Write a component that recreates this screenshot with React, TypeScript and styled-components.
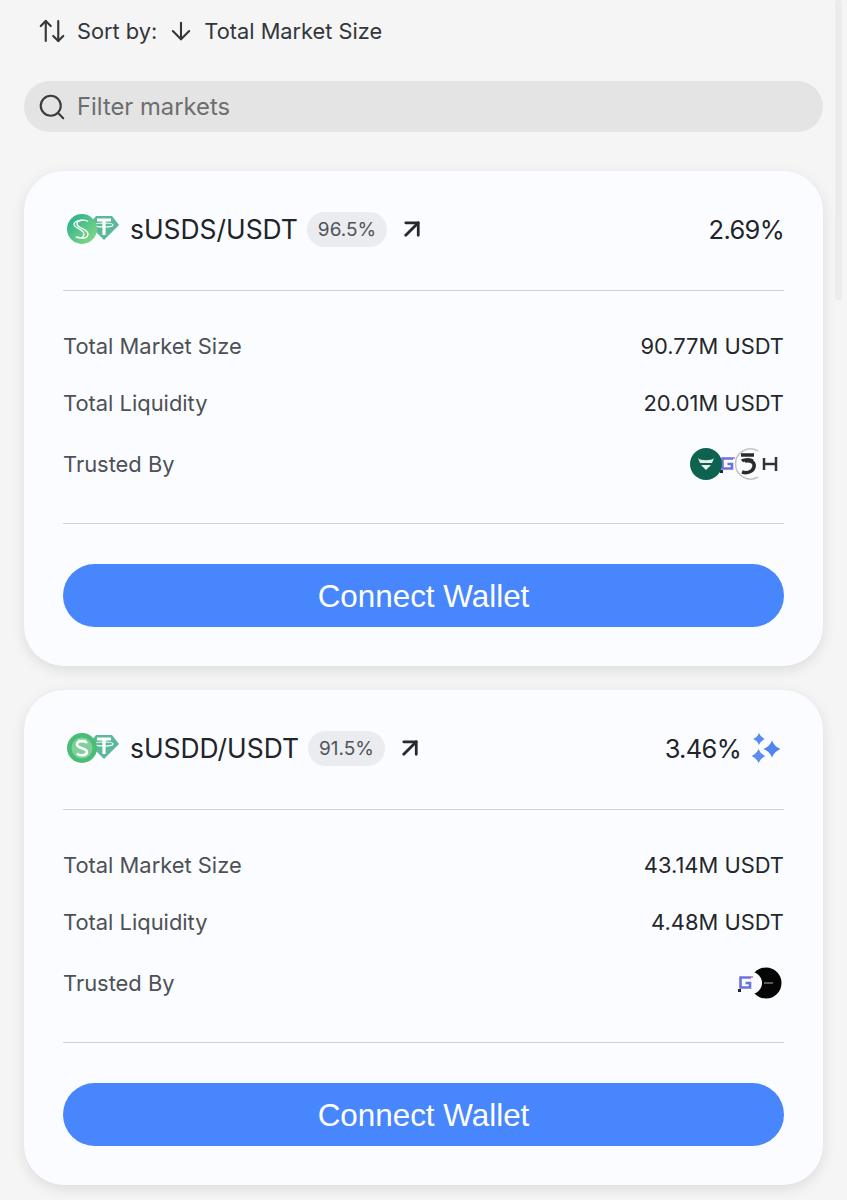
import React from "react";
import styled, { createGlobalStyle } from "styled-components";
import { ArrowDown, ArrowUpDown, ArrowUpRight, Search } from "lucide-react";

const GlobalStyle = createGlobalStyle`
  html, body {
    margin: 0;
    padding: 0;
    height: 1200px;
    overflow: hidden;
    background: #f5f5f5;
  }
  * {
    box-sizing: border-box;
  }
`;

const Page = styled.div`
  position: relative;
  height: 1200px;
  overflow: hidden;
  padding: 0 24px;
  font-family: Inter, "Liberation Sans", sans-serif;
  color: #25282c;
`;

const ScrollThumb = styled.div`
  position: absolute;
  top: 0;
  right: 5px;
  width: 7px;
  height: 300px;
  border-radius: 3px;
  background: #ececec;
`;

const SortBar = styled.div`
  display: flex;
  align-items: center;
  height: 62px;
  padding-left: 13px;
  font-size: 21.8px;
  color: #33363a;
`;

const SortLabel = styled.span`
  margin-left: 10px;
`;

const SortValue = styled.span`
  margin-left: 9px;
`;

const SortArrow = styled.span`
  display: flex;
  margin-left: 10px;
`;

const SearchBar = styled.div`
  display: flex;
  align-items: center;
  gap: 10px;
  height: 51px;
  margin-top: 19px;
  padding-left: 13px;
  border-radius: 26px;
  background: #e4e4e4;
  font-size: 23.8px;
  color: #6c6e70;
`;

const CardList = styled.div`
  display: flex;
  flex-direction: column;
  gap: 24px;
  margin-top: 39px;
`;

const Card = styled.section`
  height: 495px;
  padding: 0 39px;
  border-radius: 40px;
  background: #fbfcff;
  box-shadow: 0 4px 14px rgba(0, 0, 0, 0.1);
`;

const CardHeader = styled.div`
  display: flex;
  align-items: center;
  height: 120px;
  padding-bottom: 3px;
  border-bottom: 1px solid #cfd1d3;
`;

const PairLogo = styled.svg`
  width: 54px;
  height: 32px;
  margin-left: 4px;
  flex: none;
`;

const PairName = styled.span`
  margin-left: 9px;
  font-size: 26.4px;
  color: #212428;
`;

const Score = styled.span`
  margin-left: 9px;
  padding: 0 11px;
  height: 35px;
  line-height: 35px;
  border-radius: 18px;
  background: #ebecef;
  font-size: 19px;
  color: #50545a;
`;

const OpenLink = styled.span`
  display: flex;
  margin-left: 10px;
  color: #26292d;
`;

const Apy = styled.div`
  display: flex;
  align-items: center;
  gap: 11px;
  margin-left: auto;
  font-size: 25.5px;
  letter-spacing: -0.7px;
  color: #212428;
`;

const Stats = styled.div`
  height: 233px;
  padding-top: 26px;
  border-bottom: 1px solid #cfd1d3;
`;

const StatRow = styled.div<{ $height: number }>`
  display: flex;
  align-items: center;
  justify-content: space-between;
  height: ${({ $height }) => $height}px;
  font-size: 21.9px;
`;

const StatLabel = styled.span`
  color: #4d5156;
`;

const StatValue = styled.span`
  color: #24272b;
`;

const TrustLogos = styled.svg`
  width: 110px;
  height: 40px;
  flex: none;
`;

const SparkleIcon = styled.svg`
  width: 28px;
  height: 30px;
  margin-right: 4px;
  flex: none;
`;

const ConnectButton = styled.button`
  display: block;
  width: 100%;
  height: 63px;
  margin-top: 40px;
  padding: 2px 0 0;
  border: none;
  border-radius: 32px;
  background: #4886fe;
  color: #ffffff;
  font-family: "Liberation Sans", Arial, sans-serif;
  font-size: 31.4px;
`;

function TetherMark() {
  return (
    <>
      <path d="M29 3h16l7 9-15 15-15-15z" fill="#5cb89a" />
      <path d="M30 7h14M37 7v15" stroke="#fff" strokeWidth="3.2" fill="none" />
      <ellipse cx="37" cy="12" rx="9" ry="2" stroke="#fff" strokeWidth="1.2" fill="none" />
    </>
  );
}

function SusdsLogo() {
  return (
    <PairLogo viewBox="0 0 54 32">
      <defs>
        <linearGradient id="susds" x1="0" y1="0" x2="1" y2="1">
          <stop offset="0" stopColor="#1fae8d" />
          <stop offset="1" stopColor="#8fdc85" />
        </linearGradient>
      </defs>
      <TetherMark />
      <circle cx="15" cy="16" r="15" fill="url(#susds)" />
      <path d="M21 8.500c-3-2.500-11-1.500-11 2.500s11 5 11 10-7 5-11 2.500" stroke="#fff" strokeWidth="1.400" fill="none" />
      <path d="M16 7.500c-3.500-.5-9 .5-9 4s10 5 10 9.500-5 4.500-8.500 3" stroke="#fff" strokeWidth="1.200" fill="none" />
    </PairLogo>
  );
}

function SusddLogo() {
  return (
    <PairLogo viewBox="0 0 54 32">
      <TetherMark />
      <circle cx="15" cy="16" r="15" fill="#48bd74" />
      <circle cx="15" cy="16" r="10.500" fill="#7fd09c" />
      <path d="M20 11c-2-2.500-10-2.500-10 1.500s10 3.500 10 7.500-8 4-10 1.500" stroke="#fff" strokeWidth="2.600" fill="none" />
      <path d="M11 8.500h8" stroke="#fff" strokeWidth="1.500" />
    </PairLogo>
  );
}

function GridMark({ x, y }: { x: number; y: number }) {
  return (
    <g transform={`translate(${x} ${y})`}>
      <path d="M12 1.500H1.500V11.500H11V7H6.500" stroke="#6d72e0" strokeWidth="2.600" fill="none" />
      <rect x="-1" y="13" width="3" height="3" fill="#23233a" />
      <rect x="12" y="0" width="2" height="2" fill="#e88aa0" />
    </g>
  );
}

function FirstTrustLogos() {
  return (
    <TrustLogos viewBox="0 0 110 40">
      <GridMark x={47} y={13} />
      <path d="M84 7a15 15 0 1 0 0 26" stroke="#c4c4c4" strokeWidth="1.500" fill="none" />
      <path d="M67 11h13M79 17c-5-2-10-1-11 0M71 17c7-1 10 2 9 6s-6 7-12 5" stroke="#2b2b2b" strokeWidth="3.500" fill="none" />
      <path d="M90 14v12M102 13v14M90 20h12" stroke="#333" strokeWidth="2.500" fill="none" />
      <circle cx="32" cy="20" r="16" fill="#0e6350" />
      <path d="M24 14c2 3 14 3 16 0l-2 5H26zM27 21h10l-5 5z" fill="#e4f0ec" />
    </TrustLogos>
  );
}

function SecondTrustLogos() {
  return (
    <TrustLogos viewBox="0 0 110 40">
      <circle cx="92" cy="20" r="15.500" fill="#050505" />
      <circle cx="77" cy="20" r="11" fill="#fbfcff" />
      <path d="M90 20h9" stroke="#777" strokeWidth="1.500" />
      <GridMark x={65} y={13} />
    </TrustLogos>
  );
}

function Star({ cx, cy, r, fill }: { cx: number; cy: number; r: number; fill: string }) {
  const k = r * 0.28;
  const d = `M${cx} ${cy - r}Q${cx + k} ${cy - k} ${cx + r} ${cy}Q${cx + k} ${cy + k} ${cx} ${cy + r}Q${cx - k} ${cy + k} ${cx - r} ${cy}Q${cx - k} ${cy - k} ${cx} ${cy - r}Z`;
  return <path d={d} fill={fill} />;
}

function Sparkles() {
  return (
    <SparkleIcon viewBox="0 0 28 30">
      <Star cx={7} cy={6} r={6} fill="#5b8def" />
      <Star cx={20} cy={16} r={8.500} fill="#4c86ee" />
      <Star cx={6.500} cy={23} r={7} fill="#5b8def" />
    </SparkleIcon>
  );
}

const markets = [
  {
    pair: "sUSDS/USDT",
    score: "96.5%",
    apy: "2.69%",
    size: "90.77M USDT",
    liquidity: "20.01M USDT",
    logo: <SusdsLogo />,
    trust: <FirstTrustLogos />,
    boosted: false,
  },
  {
    pair: "sUSDD/USDT",
    score: "91.5%",
    apy: "3.46%",
    size: "43.14M USDT",
    liquidity: "4.48M USDT",
    logo: <SusddLogo />,
    trust: <SecondTrustLogos />,
    boosted: true,
  },
];

export default function App() {
  return (
    <Page>
      <GlobalStyle />
      <ScrollThumb />
      <SortBar>
        <ArrowUpDown size={30} strokeWidth={1.7} />
        <SortLabel>Sort by:</SortLabel>
        <SortArrow>
          <ArrowDown size={28} strokeWidth={1.8} />
        </SortArrow>
        <SortValue>Total Market Size</SortValue>
      </SortBar>
      <SearchBar>
        <Search size={30} strokeWidth={1.7} color="#3a3c3e" />
        Filter markets
      </SearchBar>
      <CardList>
        {markets.map((market) => (
          <Card key={market.pair}>
            <CardHeader>
              {market.logo}
              <PairName>{market.pair}</PairName>
              <Score>{market.score}</Score>
              <OpenLink>
                <ArrowUpRight size={30} strokeWidth={2.2} />
              </OpenLink>
              <Apy>
                {market.apy}
                {market.boosted && <Sparkles />}
              </Apy>
            </CardHeader>
            <Stats>
              <StatRow $height={58}>
                <StatLabel>Total Market Size</StatLabel>
                <StatValue>{market.size}</StatValue>
              </StatRow>
              <StatRow $height={56}>
                <StatLabel>Total Liquidity</StatLabel>
                <StatValue>{market.liquidity}</StatValue>
              </StatRow>
              <StatRow $height={66}>
                <StatLabel>Trusted By</StatLabel>
                {market.trust}
              </StatRow>
            </Stats>
            <ConnectButton>Connect Wallet</ConnectButton>
          </Card>
        ))}
      </CardList>
    </Page>
  );
}
